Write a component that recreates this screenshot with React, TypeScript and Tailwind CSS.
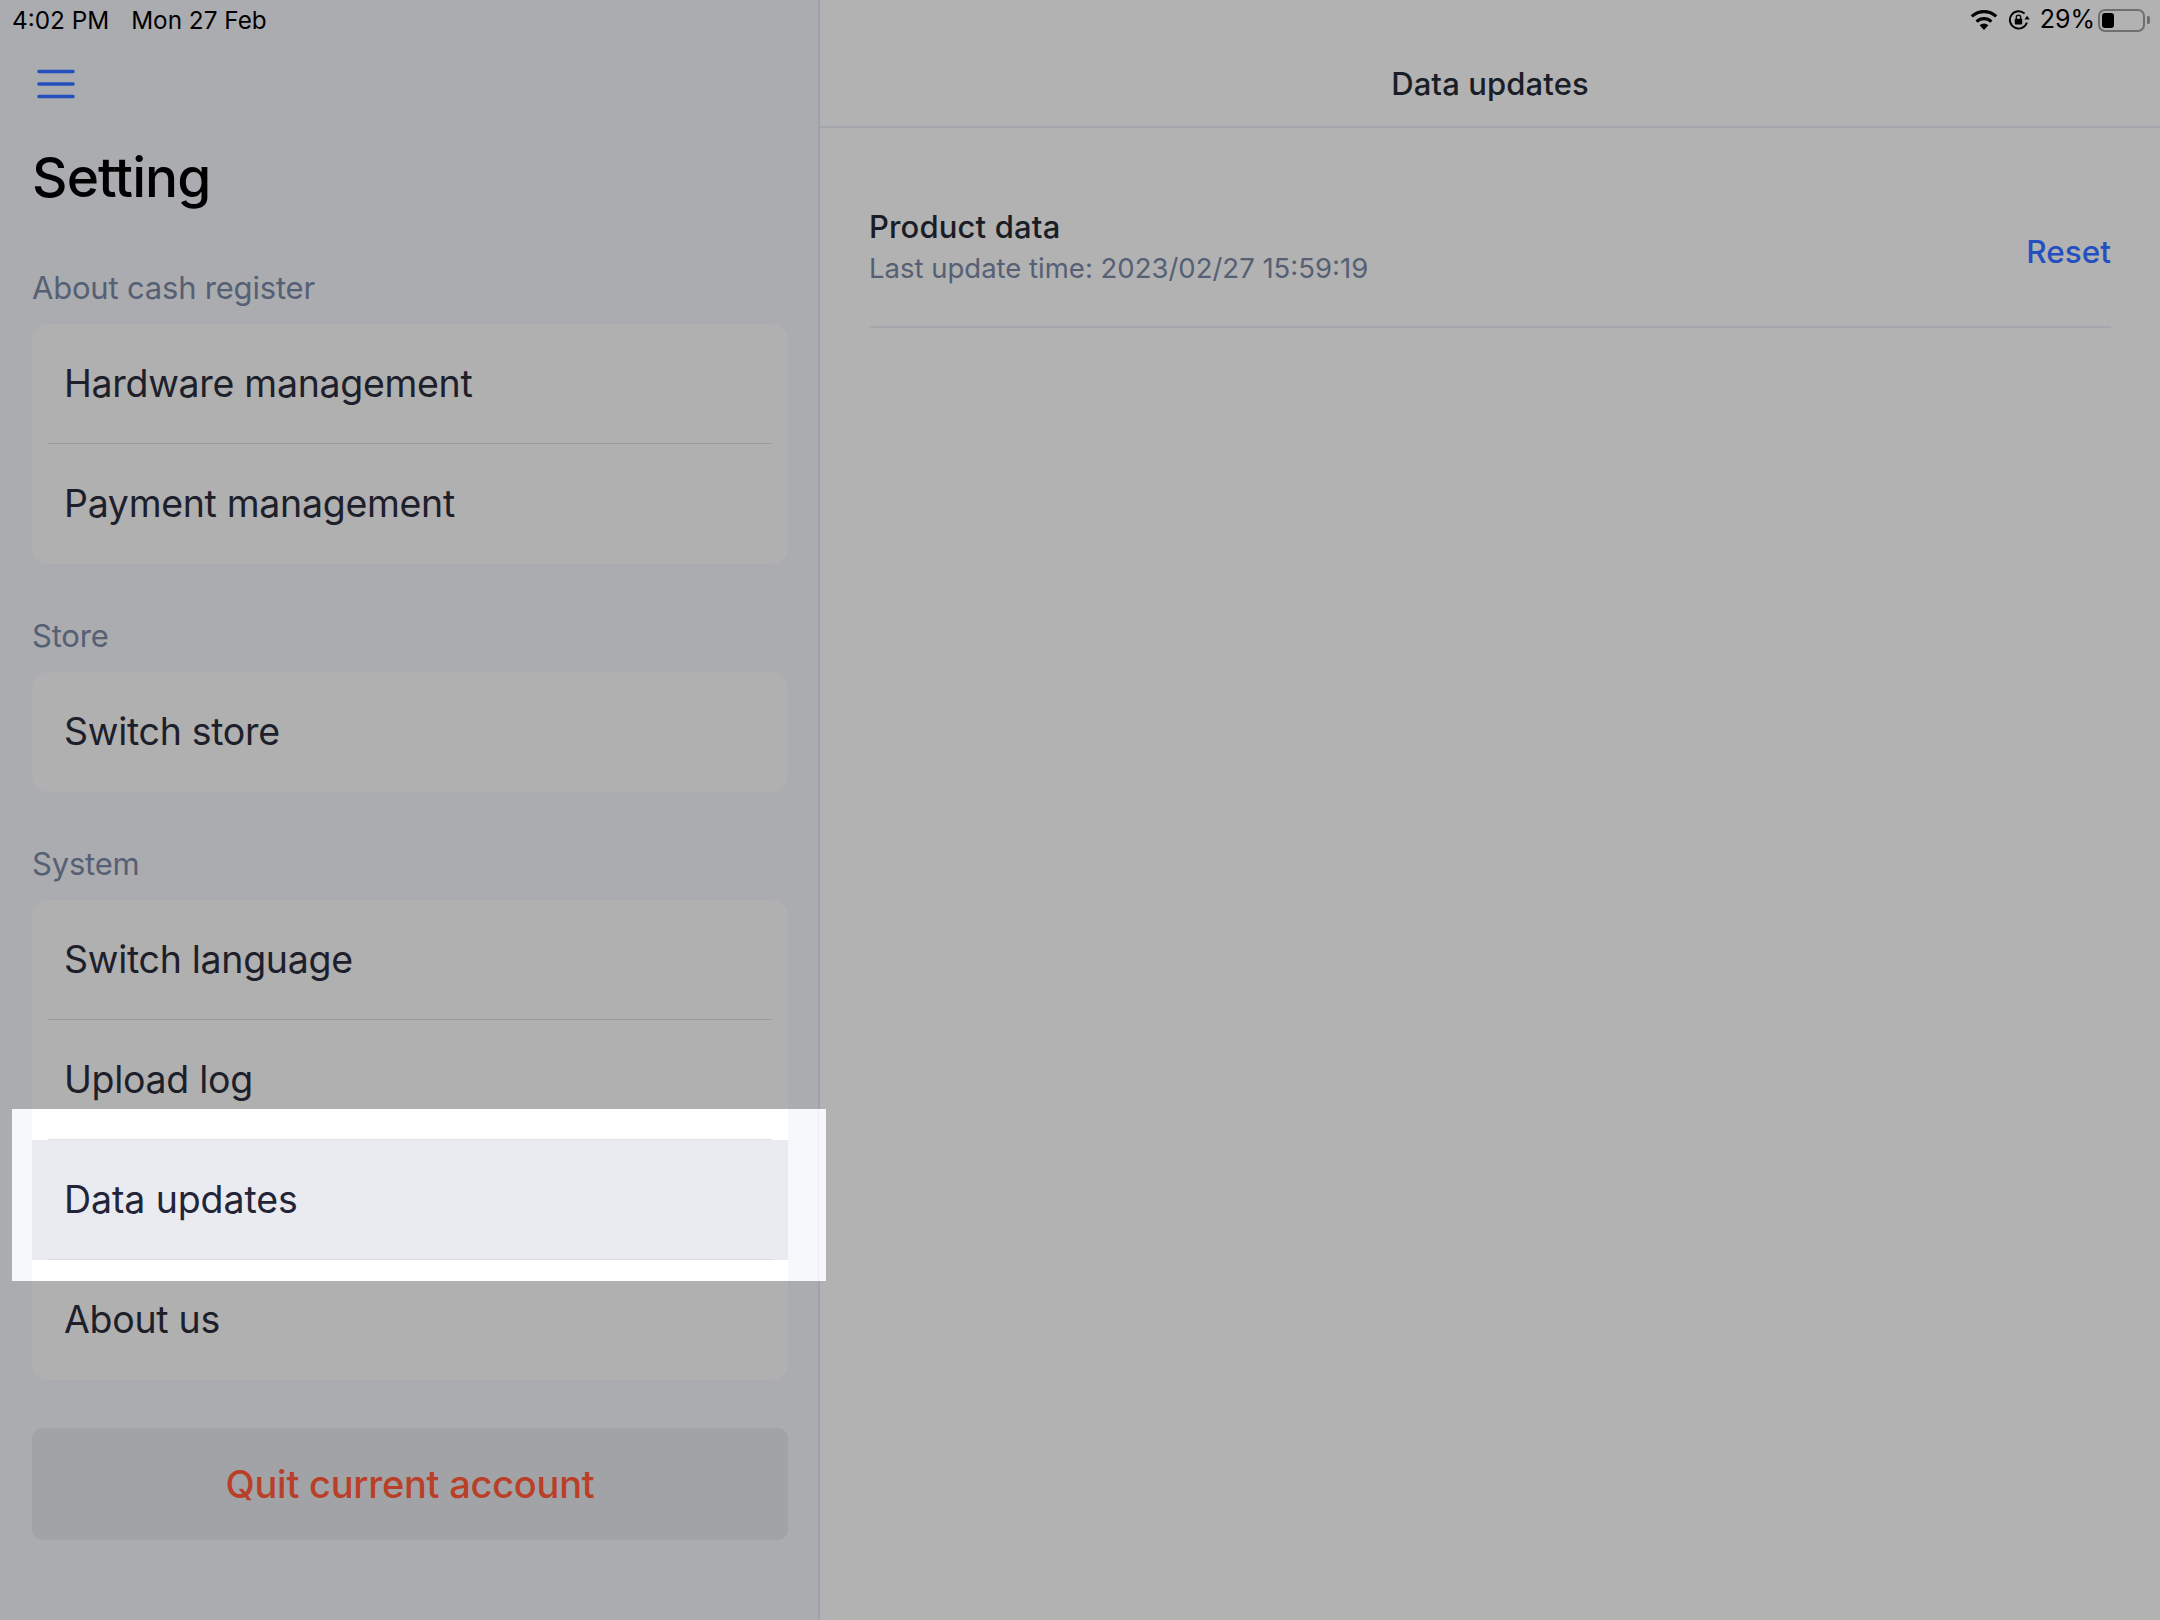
import React from "react";

const font = "font-['Inter','Liberation_Sans',sans-serif]";

function WifiIcon() {
  return (
    <svg width="28" height="20" viewBox="0 0 28 20" className="text-black">
      <path d="M14 20l-4.4-4.8a6.4 6.4 0 0 1 8.8 0z" fill="currentColor" />
      <path d="M6.6 11.6a10.8 10.8 0 0 1 14.8 0" fill="none" stroke="currentColor" strokeWidth="3.2" />
      <path d="M1.8 6.4a18 18 0 0 1 24.4 0" fill="none" stroke="currentColor" strokeWidth="3.2" />
    </svg>
  );
}

function RotationLockIcon() {
  return (
    <svg width="22" height="20" viewBox="0 0 22 20" className="text-black">
      <path d="M18.9 12.5A8.7 8.7 0 1 1 16.6 3.6" fill="none" stroke="currentColor" strokeWidth="1.9" />
      <path d="M16.4 9.6h5.4l-2.7-3.8z" fill="currentColor" />
      <rect x="6.8" y="8.8" width="7.4" height="5.8" rx="1" fill="currentColor" />
      <path d="M8.3 9V7.3a2.2 2.2 0 0 1 4.4 0V9" fill="none" stroke="currentColor" strokeWidth="1.3" />
    </svg>
  );
}

function Battery() {
  return (
    <div className="flex items-center gap-[2px]">
      <div className="w-[47px] h-[23px] rounded-[7px] border-2 border-[#6f6f6f] p-[2px]">
        <div className="w-[12px] h-full rounded-[3px] bg-black" />
      </div>
      <div className="w-[3px] h-[8px] rounded-r-[2px] bg-[#6f6f6f]" />
    </div>
  );
}

function MenuIcon() {
  return (
    <svg width="40" height="30" viewBox="0 0 40 30" className="text-[#2450bf]">
      <path d="M3 2.5h34M3 15h34M3 27.5h34" stroke="currentColor" strokeWidth="3.6" strokeLinecap="round" />
    </svg>
  );
}

function Row({ label, divider }: { label: string; divider?: boolean }) {
  return (
    <div className="relative h-[120px] flex items-center pl-[32px] text-[37.5px] tracking-[-0.3px] text-[#1d202b]">
      {label}
      {divider && <div className="absolute left-[16px] right-[16px] bottom-0 h-px bg-[#9b9ca2]" />}
    </div>
  );
}

function Section({ title, items }: { title: string; items: string[] }) {
  return (
    <div>
      <div className="h-[59px] text-[31px] tracking-[-0.2px] leading-[46px] text-[#566074]">{title}</div>
      <div className="rounded-[16px] bg-[#b0b0b0] overflow-hidden">
        {items.map((item, i) => (
          <Row key={i} label={item} divider={i < items.length - 1} />
        ))}
      </div>
    </div>
  );
}

export default function App() {
  return (
    <div className={`${font} relative w-[2160px] h-[1620px] flex overflow-hidden bg-[#b2b2b2]`}>
      {/* Left column */}
      <div className="w-[820px] h-full shrink-0 bg-[#abacb0] border-r-2 border-[#a0a2aa]">
        <div className="h-[40px] flex items-center pl-[12px] gap-[22px] text-[24.3px] text-black">
          <span>4:02 PM</span>
          <span>Mon 27 Feb</span>
        </div>
        <div className="pl-[36px] pt-[29px] h-[70px]">
          <MenuIcon />
        </div>
        <div className="mt-[32px] pl-[32px] h-[70px] text-[55px] leading-[70px] font-medium tracking-[-0.9px] text-black">
          Setting
        </div>
        <div className="pl-[32px] pr-[30px] mt-[53px] flex flex-col">
          <Section title="About cash register" items={["Hardware management", "Payment management"]} />
          <div className="h-[49px]" />
          <Section title="Store" items={["Switch store"]} />
          <div className="h-[49px]" />
          {/* the third row is drawn by the highlight on top */}
          <Section title="System" items={["Switch language", "Upload log", "", "About us"]} />
          <div className="mt-[48px] h-[112px] rounded-[10px] bg-[#a2a3a7] flex items-center justify-center text-[38px] font-medium tracking-[-0.25px] text-[#ba3f28]">
            Quit current account
          </div>
        </div>
      </div>

      {/* Right column */}
      <div className="flex-1 flex flex-col">
        <div className="h-[40px] flex items-center justify-end gap-[3px] pr-[10px] text-[25px] text-black">
          <div className="flex items-center gap-[10px] mr-[7px]">
            <WifiIcon />
            <RotationLockIcon />
          </div>
          <span>29%</span>
          <Battery />
        </div>
        <div className="h-[88px] pt-[3px] border-b-2 border-[#a4a7ab] flex items-center justify-center text-[31px] tracking-[0.12px] font-medium text-[#1a1d26]">
          Data updates
        </div>
        <div className="mx-[49px] mt-[77px] h-[123px] border-b-2 border-[#a4a7ab] flex items-start justify-between">
          <div>
            <div className="text-[31px] tracking-[0.15px] leading-[44px] font-medium text-[#1a1d26]">Product data</div>
            <div className="text-[27.5px] leading-[38px] text-[#566074]">Last update time: 2023/02/27 15:59:19</div>
          </div>
          <div className="mt-[25px] text-[31.5px] leading-[44px] font-medium text-[#2450bf]">Reset</div>
        </div>
      </div>

      {/* Tutorial highlight lying over the dimmed page */}
      <div className="absolute left-[12px] top-[1109px] w-[814px] h-[172px] flex bg-[#f7f8fc]">
        <div className="ml-[20px] w-[756px] bg-white flex flex-col">
          <div className="h-[31px] shrink-0" />
          <div className="relative h-[120px] bg-[#eaebf0] flex items-center pl-[32px] text-[37.5px] tracking-[-0.1px] text-[#222538]">
            <div className="absolute left-[16px] right-[16px] top-[-1px] h-px bg-[#e2e3e9]" />
            Data updates
            <div className="absolute left-[16px] right-[16px] bottom-0 h-px bg-[#d9dae2]" />
          </div>
        </div>
        <div className="ml-[30px] w-px bg-[#eceef3]" />
      </div>
    </div>
  );
}
